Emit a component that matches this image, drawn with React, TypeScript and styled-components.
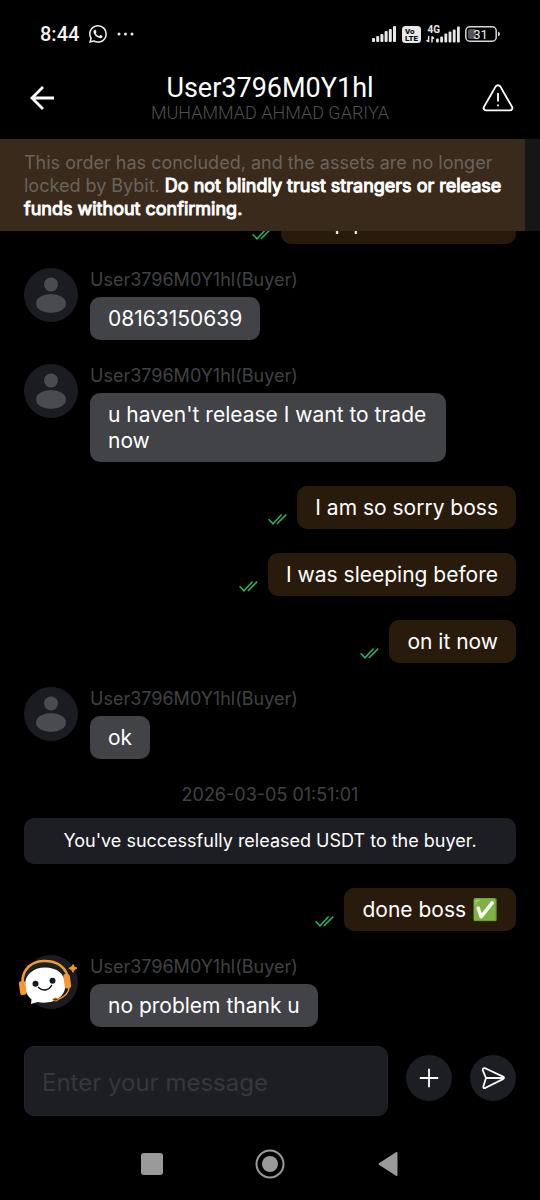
import React from "react";
import styled, { createGlobalStyle } from "styled-components";
import { BsWhatsapp } from "react-icons/bs";

const Global = createGlobalStyle`
  *, *::before, *::after { box-sizing: border-box; }
  body { margin: 0; background: #000; }
  button { font: inherit; color: inherit; border: 0; padding: 0; background: none; cursor: pointer; }
  svg { display: block; flex: none; }
`;

const Screen = styled.div`
  display: flex;
  flex-direction: column;
  height: 100vh;
  background: #000;
  color: #fff;
  font-family: Inter, "Liberation Sans", sans-serif;
  overflow: hidden;
`;

const StatusBar = styled.div`
  display: flex;
  align-items: center;
  justify-content: space-between;
  height: 68px;
  flex: none;
  padding: 0 40px;
  color: #f2f2f2;
`;

const StatusGroup = styled.div<{ $gap: number }>`
  display: flex;
  align-items: center;
  gap: ${(p) => p.$gap}px;
`;

const Clock = styled.span`
  font: 500 20px/24px Roboto, sans-serif;
`;

const Header = styled.header`
  display: flex;
  align-items: center;
  justify-content: space-between;
  flex: none;
  height: 71px;
  padding: 0 24px 12px;
`;

const HeaderButton = styled.button`
  display: grid;
  place-items: center;
  width: 36px;
  height: 36px;
`;

const Titles = styled.div`
  text-align: center;
  font-family: Roboto, sans-serif;
`;

const Title = styled.h1`
  margin: 0;
  font-size: 27px;
  line-height: 30px;
  font-weight: 400;
`;

const Subtitle = styled.p`
  margin: 0;
  font-size: 18px;
  line-height: 20px;
  font-weight: 300;
  color: #505153;
`;

const Notice = styled.section`
  flex: none;
  padding: 12px 12px 11px 24px;
  border-right: 15px solid #161616;
  background: #392a1b;
  color: #6a645e;
  font-size: 18px;
  line-height: 23px;
`;

const NoticeText = styled.p`
  margin: 0;
`;

const Strong = styled.strong`
  font-weight: 400;
  color: #fff;
  -webkit-text-stroke: 1px #fff;
`;

const Messages = styled.main`
  display: flex;
  flex-direction: column;
  justify-content: flex-end;
  flex: 1;
  min-height: 0;
  gap: 24px;
  padding: 0 24px 19px;
  overflow: hidden;
`;

const Incoming = styled.article`
  display: flex;
  align-items: flex-start;
  flex: none;
  gap: 12px;
`;

const Outgoing = styled.article`
  display: flex;
  align-items: flex-end;
  justify-content: flex-end;
  flex: none;
  gap: 10px;
`;

const Avatar = styled.div`
  flex: none;
  width: 54px;
  height: 54px;
  border-radius: 50%;
  background: #1b1c21;

  svg { overflow: visible; }
`;

const Column = styled.div`
  display: flex;
  flex-direction: column;
  align-items: flex-start;
  gap: 5px;
`;

const Sender = styled.span`
  font-size: 18px;
  line-height: 24px;
  color: #414244;
`;

const Bubble = styled.p<{ $own?: boolean }>`
  margin: 0;
  max-width: 356px;
  padding: 9px 18px 8px;
  border-radius: 10px;
  background: ${(p) => (p.$own ? "#291b0b" : "#414347")};
  font-size: 21px;
  line-height: 26px;
`;

const TickBox = styled.span`
  padding-bottom: 4px;
`;

const SystemEvent = styled.section`
  display: flex;
  flex-direction: column;
  flex: none;
  gap: 12px;
  text-align: center;
  font-size: 18px;
`;

const Stamp = styled.time`
  line-height: 23px;
  color: #414244;
`;

const SystemBox = styled.p`
  margin: 0;
  padding: 11px 18px;
  border-radius: 10px;
  background: #1d1e23;
  line-height: 24px;
`;

const Composer = styled.form`
  display: flex;
  flex: none;
  gap: 18px;
  padding: 0 24px 12px;
`;

const MessageInput = styled.input`
  flex: 1;
  min-width: 0;
  height: 70px;
  padding: 3px 17px 0;
  border: 1px solid #232429;
  border-radius: 10px;
  outline: 0;
  background: #1d1e23;
  color: #fff;
  font: 400 24px/30px Inter, "Liberation Sans", sans-serif;

  &::placeholder { color: #36373b; opacity: 1; }
`;

const RoundButton = styled.button`
  display: grid;
  place-items: center;
  width: 46px;
  height: 46px;
  margin-top: 9px;
  border-radius: 50%;
  background: #1d1e23;
`;

const NavBar = styled.nav`
  display: flex;
  align-items: center;
  justify-content: center;
  flex: none;
  gap: 74px;
  height: 72px;
`;

const NavButton = styled.button`
  display: grid;
  place-items: center;
  width: 44px;
  height: 44px;
`;

const bars = [4, 6, 8, 11, 13, 16];

const Signal = () => (
  <svg width="25" height="16" viewBox="0 0 25 16" fill="#e8e8e8">
    {bars.map((h, i) => (
      <rect key={i} x={i * 4.2} y={16 - h} width="3" height={h} rx="1" />
    ))}
  </svg>
);

const VoLte = () => (
  <svg width="19" height="17" viewBox="0 0 19 17">
    <rect width="19" height="17" rx="3.5" fill="#e8e8e8" />
    <g fill="#111" fontFamily="Roboto, sans-serif" fontWeight="900" fontSize="8">
      <text x="3" y="8">Vo</text>
      <text x="3" y="15">LTE</text>
    </g>
  </svg>
);

const MobileData = () => (
  <svg width="34" height="18" viewBox="0 0 34 18" fill="#e8e8e8">
    <text x="1.500" y="8" fontFamily="Roboto, sans-serif" fontWeight="700" fontSize="10">4G</text>
    <path d="M2.6 11v6M.6 15l2 2M6 17.500v-6M8 13.500l-2-2" stroke="#e8e8e8" strokeWidth="1.400" fill="none" />
    {[4, 6, 9, 11, 13, 16].map((h, i) => (
      <rect key={i} x={10 + i * 4.2} y={17.5 - h} width="2.800" height={h} rx="1" />
    ))}
  </svg>
);

const Battery = () => (
  <svg width="35" height="16" viewBox="0 0 35 16">
    <rect x="3" y="3" width="8" height="10" rx="2" fill="#555" />
    <rect x=".8" y=".8" width="30.400" height="14.400" rx="4" fill="none" stroke="#d8d8d8" strokeWidth="1.500" />
    <path d="M33 5.800q2 .4 2 2.200t-2 2.200z" fill="#d8d8d8" />
    <text x="15.500" y="12.500" textAnchor="middle" fill="#eee" fontFamily="Roboto, sans-serif" fontSize="13">31</text>
  </svg>
);

const Ticks = () => (
  <svg width="19" height="11" viewBox="0 0 19 11" fill="none" stroke="#27b562" strokeWidth="1.500">
    <path d="M.6 5.200l4.400 4.600L13.600.6M8.900 10L18.200.6" />
  </svg>
);

const Person = () => (
  <svg width="54" height="54" viewBox="0 0 54 54" fill="#484b50">
    <circle cx="27" cy="16.500" r="7" />
    <ellipse cx="27" cy="35.500" rx="15" ry="9.500" />
  </svg>
);

const Mascot = () => (
  <svg width="54" height="54" viewBox="0 0 54 54">
    <path d="M1 28C0 14 10 8 21 8c11 0 19 5 21 13" fill="none" stroke="#1c2420" strokeWidth="5" />
    <path d="M-1.500 28C-2 13 9 6.500 19 6c11-.4 20 4 24 13" fill="none" stroke="#f8962f" strokeWidth="2.600" />
    <path d="M21 12.500C9 12.500 1 20 1 30c0 6 2.500 11 6.500 14.200L7 49l6.500-2C28 50 41.500 43 41.500 29.500 41 19 33 12.500 21 12.500z" fill="#fff" />
    <rect x="-4.500" y="26" width="6.500" height="14" rx="2.200" fill="#f8962f" transform="rotate(-8 -1 33)" />
    <rect x="40" y="19" width="6.500" height="14.500" rx="2.600" fill="#f8962f" transform="rotate(-8 43 26)" />
    <path d="M45 32c0 6-4 10-12 12.800" fill="none" stroke="#f8962f" strokeWidth="1.400" />
    <ellipse cx="31.500" cy="44.500" rx="2.600" ry="1.500" fill="#51361f" stroke="#f8962f" />
    <circle cx="11.500" cy="28.800" r="3" fill="#17181b" />
    <circle cx="28.500" cy="25.800" r="3" fill="#17181b" />
    <path d="M14.500 32.500c4 4 10.500 3 13-2" fill="none" stroke="#17181b" strokeWidth="1.600" strokeLinecap="round" />
    <path d="M49 9.500q.6 3.200 4 3.700-3.400.8-4 4.100-.8-3.300-4.200-4 3.400-.6 4.200-3.800z" fill="#f8962f" stroke="#f8962f" strokeLinejoin="round" />
  </svg>
);

type Entry =
  | { kind: "in"; text: string; mascot?: boolean }
  | { kind: "out"; text: string }
  | { kind: "system"; time: string; text: string };

const entries: Entry[] = [
  { kind: "out", text: "Drop phone number" },
  { kind: "in", text: "08163150639" },
  { kind: "in", text: "u haven't release I want to trade now" },
  { kind: "out", text: "I am so sorry boss" },
  { kind: "out", text: "I was sleeping before" },
  { kind: "out", text: "on it now" },
  { kind: "in", text: "ok" },
  { kind: "system", time: "2026-03-05 01:51:01", text: "You've successfully released USDT to the buyer." },
  { kind: "out", text: "done boss ✅" },
  { kind: "in", text: "no problem thank u", mascot: true },
];

const Message = ({ entry }: { entry: Entry }) => {
  if (entry.kind === "system") {
    return (
      <SystemEvent>
        <Stamp>{entry.time}</Stamp>
        <SystemBox>{entry.text}</SystemBox>
      </SystemEvent>
    );
  }
  if (entry.kind === "out") {
    return (
      <Outgoing>
        <TickBox><Ticks /></TickBox>
        <Bubble $own>{entry.text}</Bubble>
      </Outgoing>
    );
  }
  return (
    <Incoming>
      <Avatar>{entry.mascot ? <Mascot /> : <Person />}</Avatar>
      <Column>
        <Sender>User3796M0Y1hl(Buyer)</Sender>
        <Bubble>{entry.text}</Bubble>
      </Column>
    </Incoming>
  );
};

export default function App() {
  return (
    <Screen>
      <Global />
      <StatusBar>
        <StatusGroup $gap={10}>
          <Clock>8:44</Clock>
          <BsWhatsapp size={18} />
          <svg width="17" height="4" viewBox="0 0 17 4" fill="#e8e8e8">
            <circle cx="2" cy="2" r="1.500" />
            <circle cx="8.500" cy="2" r="1.500" />
            <circle cx="15" cy="2" r="1.500" />
          </svg>
        </StatusGroup>
        <StatusGroup $gap={5}>
          <Signal />
          <VoLte />
          <MobileData />
          <Battery />
        </StatusGroup>
      </StatusBar>

      <Header>
        <HeaderButton type="button" aria-label="Back">
          <svg width="24" height="24" viewBox="0 0 24 24" fill="none" stroke="#fff" strokeWidth="2.800">
            <path d="M24 12H2M13 1L2 12l11 11" />
          </svg>
        </HeaderButton>
        <Titles>
          <Title>User3796M0Y1hl</Title>
          <Subtitle>MUHAMMAD AHMAD GARIYA</Subtitle>
        </Titles>
        <HeaderButton type="button" aria-label="Report">
          <svg width="34" height="30" viewBox="-1 -1 36 32" fill="none" stroke="#fff" strokeWidth="2" strokeLinecap="round" strokeLinejoin="round">
            <path d="M14.600 2.600a3 3 0 0 1 4.800 0L32 24.500a2.500 2.500 0 0 1-2.200 3.700H4.200A2.500 2.500 0 0 1 2 24.500z" />
            <path d="M17 10.500v7.500M17 22.600v.4" />
          </svg>
        </HeaderButton>
      </Header>

      <Notice>
        <NoticeText>
          This order has concluded, and the assets are no longer locked by Bybit.{" "}
          <Strong>Do not blindly trust strangers or release funds without confirming.</Strong>
        </NoticeText>
      </Notice>

      <Messages>
        {entries.map((entry, i) => (
          <Message key={i} entry={entry} />
        ))}
      </Messages>

      <Composer onSubmit={(e) => e.preventDefault()}>
        <MessageInput type="text" aria-label="Message" placeholder="Enter your message" />
        <RoundButton type="button" aria-label="Add attachment">
          <svg width="20" height="20" viewBox="0 0 20 20" stroke="#fff" strokeWidth="1.800">
            <path d="M10 .8v18.400M.8 10h18.400" />
          </svg>
        </RoundButton>
        <RoundButton type="submit" aria-label="Send">
          <svg width="24" height="24" viewBox="0 0 24 24" fill="none" stroke="#fff" strokeWidth="1.800" strokeLinejoin="round" strokeLinecap="round">
            <path d="M4.200 2.200L22 10.600q2.200 1.200 0 2.500L4.600 21.800Q2 22.800 2.400 20.200L5 12 1.800 4.400Q1.600 1.600 4.200 2.200zM5.200 12H22" />
          </svg>
        </RoundButton>
      </Composer>

      <NavBar>
        <NavButton type="button" aria-label="Recent apps">
          <svg width="22" height="22" viewBox="0 0 22 22"><rect width="22" height="22" rx="3" fill="#9a9a9a" /></svg>
        </NavButton>
        <NavButton type="button" aria-label="Home">
          <svg width="30" height="30" viewBox="0 0 30 30">
            <circle cx="15" cy="15" r="13.500" fill="none" stroke="#9a9a9a" strokeWidth="2" />
            <circle cx="15" cy="15" r="8" fill="#9a9a9a" />
          </svg>
        </NavButton>
        <NavButton type="button" aria-label="Back to previous app">
          <svg width="20" height="26" viewBox="0 0 20 26">
            <path d="M1.500 13L18.500 2v22z" fill="#9a9a9a" stroke="#9a9a9a" strokeWidth="2" strokeLinejoin="round" />
          </svg>
        </NavButton>
      </NavBar>
    </Screen>
  );
}
